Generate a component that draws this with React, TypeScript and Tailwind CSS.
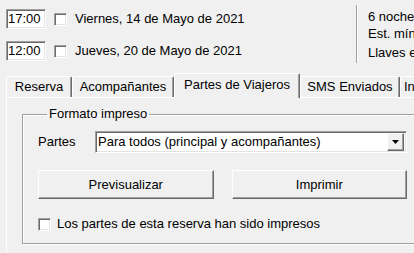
import React from "react";

const FONT = { fontFamily: '"Liberation Sans", Arial, sans-serif' };

// Casilla clásica hundida
function CheckBox() {
  return (
    <span className="inline-block w-[13px] h-[13px] shrink-0 bg-white border border-t-[#a0a0a0] border-l-[#a0a0a0] border-r-white border-b-white shadow-[inset_1px_1px_0_#696969,inset_-1px_-1px_0_#e3e3e3]" />
  );
}

function TimeBox({ value }: { value: string }) {
  return (
    <div className="w-[40px] h-[20px] bg-white border border-t-[#a0a0a0] border-l-[#a0a0a0] border-r-white border-b-white shadow-[inset_1px_1px_0_#696969,inset_-1px_-1px_0_#e3e3e3] pl-[1px] flex items-center leading-[16px]">
      {value}
    </div>
  );
}

function Tab({ label, width, active, start }: { label: string; width: string; active?: boolean; start?: boolean }) {
  if (active) {
    return (
      <div
        className={`${width} shrink-0 h-[25px] -mb-[1px] relative z-10 bg-[#f0f0f0] border-t border-l border-t-white border-l-white border-r border-r-[#696969] shadow-[inset_-1px_0_0_#a0a0a0] rounded-t-[2px] pt-[3px] flex justify-center leading-[16px] whitespace-nowrap`}
      >
        {label}
      </div>
    );
  }
  return (
    <div
      className={`${width} shrink-0 h-[21px] bg-[#f0f0f0] border-t border-l border-t-white border-l-white border-r border-r-[#696969] shadow-[inset_-1px_0_0_#a0a0a0] rounded-t-[2px] flex items-center ${start ? "justify-start pl-[3px]" : "justify-center"} leading-[16px] whitespace-nowrap`}
    >
      {label}
    </div>
  );
}

function Button({ label }: { label: string }) {
  return (
    <button className="flex-1 h-[29px] bg-[#f0f0f0] border border-t-white border-l-white border-r-[#696969] border-b-[#696969] shadow-[inset_-1px_-1px_0_#a0a0a0] flex items-center justify-center leading-[16px]">
      {label}
    </button>
  );
}

export default function App() {
  return (
    <div className="w-[414px] h-[253px] overflow-hidden bg-[#f0f0f0] text-black text-[13px]" style={FONT}>
      <div className="w-[520px]">
        {/* fechas de entrada / salida */}
        <div className="flex pt-[5px] h-[73px]">
          <div className="w-[356px] shrink-0 pl-[6px] pt-[4px]">
            <div className="flex items-center h-[20px]">
              <TimeBox value="17:00" />
              <span className="ml-[8px] flex"><CheckBox /></span>
              <span className="ml-[8px] leading-[16px]">Viernes, 14 de Mayo de 2021</span>
            </div>
            <div className="flex items-center h-[20px] mt-[12px]">
              <TimeBox value="12:00" />
              <span className="ml-[8px] flex"><CheckBox /></span>
              <span className="ml-[8px] leading-[16px]">Jueves, 20 de Mayo de 2021</span>
            </div>
          </div>
          <div className="h-[58px] border-l border-l-[#a0a0a0] shadow-[inset_1px_0_0_white] pl-[11px] pt-[3px] whitespace-nowrap">
            <div className="h-[17px] leading-[17px]">6 noches</div>
            <div className="h-[17px] leading-[17px]">Est. mínima</div>
            <div className="h-[17px] leading-[17px] mt-[2px]">Llaves entregadas</div>
          </div>
        </div>

        {/* pestañas */}
        <div className="flex items-end h-[24px] pl-[6px]">
          <Tab label="Reserva" width="w-[66px]" />
          <Tab label="Acompañantes" width="w-[102px]" />
          <Tab label="Partes de Viajeros" width="w-[126px]" active />
          <Tab label="SMS Enviados" width="w-[100px]" />
          <Tab label="Información" width="w-[90px]" start />
        </div>

        {/* panel */}
        <div className="ml-[6px] border-t border-l border-white pl-[15px] pt-[8px] h-[200px]">
          <fieldset className="w-[401px] border border-[#a0a0a0] shadow-[inset_1px_1px_0_white,1px_1px_0_white] px-[15px] pb-[11px]">
            <legend className="ml-[9px] px-[2px] leading-[16px]">Formato impreso</legend>
            <div className="flex items-center h-[22px] mt-[9px]">
              <span className="w-[57px] leading-[16px]">Partes</span>
              <div className="flex-1 h-[22px] bg-white border border-t-[#a0a0a0] border-l-[#a0a0a0] border-r-white border-b-white shadow-[inset_1px_1px_0_#696969,inset_-1px_-1px_0_#e3e3e3] flex items-center pl-[2px] pr-[2px]">
                <span className="flex-1 leading-[16px] whitespace-nowrap">Para todos (principal y acompañantes)</span>
                <span className="w-[17px] h-[18px] bg-[#f0f0f0] border border-t-white border-l-white border-r-[#696969] border-b-[#696969] shadow-[inset_-1px_-1px_0_#a0a0a0] flex items-center justify-center">
                  <svg width="7" height="4" viewBox="0 0 7 4">
                    <path d="M0 0h7L3.5 4z" fill="black" />
                  </svg>
                </span>
              </div>
            </div>
            <div className="flex gap-[18px] mt-[17px]">
              <Button label="Previsualizar" />
              <Button label="Imprimir" />
            </div>
            <div className="flex items-center h-[16px] mt-[17px]">
              <CheckBox />
              <span className="ml-[6px] leading-[16px]">Los partes de esta reserva han sido impresos</span>
            </div>
          </fieldset>
        </div>
      </div>
    </div>
  );
}
